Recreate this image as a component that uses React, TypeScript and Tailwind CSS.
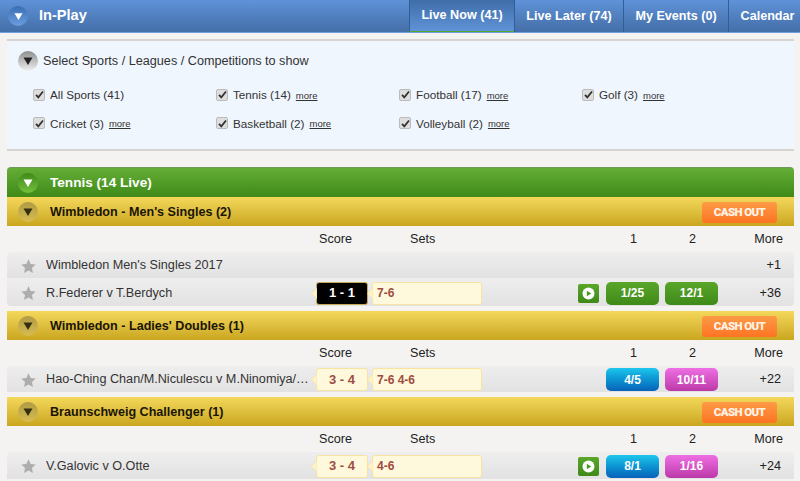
const FONT = "font-['Liberation_Sans',Arial,sans-serif]";

function Arrow(props: { color: string; size?: number }) {
  const s = props.size ?? 10;
  return (
    <svg width={s} height={s} viewBox="0 0 10 10">
      <path d="M0.5 1.5H9.5L5 9Z" fill={props.color} />
    </svg>
  );
}

function Star() {
  return (
    <svg width="15" height="14" viewBox="0 0 24 23">
      <path d="M12 0.5l3.5 7.6 8.3 1-6.1 5.700 1.6 8.200L12 18.900 4.700 23l1.600-8.200L0.200 9.100l8.300-1z" fill="#aeadad" />
    </svg>
  );
}

function Play() {
  return (
    <div className="flex h-[19px] w-[21px] items-center justify-center rounded-[2px] bg-gradient-to-b from-[#5aa62a] to-[#3f8a18]">
      <svg width="13" height="13" viewBox="0 0 13 13">
        <circle cx="6.500" cy="6.500" r="6" fill="#fff" />
        <path d="M4.800 3.700L9.300 6.500 4.800 9.300Z" fill="#4c9a20" />
      </svg>
    </div>
  );
}

function CashOut() {
  return (
    <div className="mt-[2px] flex h-[21px] w-[75px] items-center justify-center rounded-[3px] bg-gradient-to-b from-[#fd9a45] to-[#fd7322] pt-[1px] font-['Roboto',sans-serif] text-[11.5px] font-black tracking-[-0.6px] text-[#fdf3e6]">
      CASH OUT
    </div>
  );
}

function GoldBar(props: { title: string }) {
  return (
    <div className="flex h-[29px] items-center border-b border-b-[#c8a722] bg-gradient-to-b from-[#f4d85a] to-[#cba81f] pr-[17px]">
      <div className="ml-[11px] mt-[2px] flex h-5 w-5 items-center justify-center rounded-full bg-gradient-to-b from-[#b09a45] to-[#d8bc50]">
        <Arrow color="#34300f" />
      </div>
      <div className="ml-[12px] mt-[2px] flex-1 text-[12.6px] font-bold text-[#1a1505]">{props.title}</div>
      <CashOut />
    </div>
  );
}

function ColumnHeads() {
  return (
    <div className="flex h-[26px] items-center pt-[1px] text-[12.6px] text-[#222]">
      <div className="w-[312px] shrink-0" />
      <div className="w-[91px] shrink-0">Score</div>
      <div className="w-[197px] shrink-0">Sets</div>
      <div className="w-[53px] shrink-0 text-center">1</div>
      <div className="w-[6px] shrink-0" />
      <div className="w-[53px] shrink-0 text-center">2</div>
      <div className="flex-1 pr-[11px] text-right">More</div>
    </div>
  );
}

type MatchProps = {
  name: string;
  score?: string;
  black?: boolean;
  sets?: string;
  play?: boolean;
  odds?: [string, string];
  tone?: 'green' | 'color';
  more: string;
  h: string;
};

function Notch() {
  return (
    <svg className="absolute left-[-6px] top-[5px] z-10" width="6" height="11" viewBox="0 0 6 11">
      <path d="M6 0L0.500 5.500 6 11Z" fill="#fdf3c4" stroke="#f6dfa0" strokeWidth="0.6" />
    </svg>
  );
}

function ScoreBox(props: { score: string; black?: boolean }) {
  return (
    <div
      className={`relative flex h-[23px] w-[52px] shrink-0 items-center justify-center rounded-[3px] border text-[13px] font-bold ${
        props.black ? 'border-[#c9a95a] bg-black text-white' : 'border-[#f8e3a0] bg-[#fef8dc] text-[#a04c40]'
      }`}
    >
      <Notch />
      {props.score}
    </div>
  );
}

function Odd(props: { label: string; style: string }) {
  return (
    <div
      className={`flex h-[23px] w-[53px] shrink-0 items-center justify-center rounded-[5px] text-[12px] font-bold text-white ${props.style}`}
    >
      {props.label}
    </div>
  );
}

function Match(props: MatchProps) {
  const left =
    props.tone === 'green'
      ? 'bg-gradient-to-b from-[#5aa62a] to-[#3f8a18]'
      : 'bg-gradient-to-b from-[#1ec6ec] to-[#0b62b8]';
  const right =
    props.tone === 'green'
      ? 'bg-gradient-to-b from-[#5aa62a] to-[#3f8a18]'
      : 'bg-gradient-to-b from-[#ee6fe4] to-[#bc38a8]';
  return (
    <div className={`flex items-center bg-gradient-to-b from-[#efeeee] to-[#e3e2e3] text-[12.65px] text-[#333] ${props.h}`}>
      <div className="flex w-[39px] shrink-0 justify-end pr-[10px]">
        <Star />
      </div>
      <div className="mr-[6px] w-[264px] shrink-0 whitespace-nowrap">{props.name}</div>
      {props.score ? <ScoreBox score={props.score} black={props.black} /> : <div className="w-[52px] shrink-0" />}
      {props.sets ? (
        <div className="relative ml-[4px] flex h-[23px] w-[110px] shrink-0 items-center rounded-[3px] border border-[#f8e3a0] bg-[#fef8dc] pl-[4px] text-[12px] font-bold text-[#a04c40]">
          <Notch />
          {props.sets}
        </div>
      ) : (
        <div className="ml-[4px] w-[110px] shrink-0" />
      )}
      <div className="flex w-[117px] shrink-0 justify-end">{props.play && <Play />}</div>
      <div className="w-[7px] shrink-0" />
      {props.odds ? (
        <div className="flex shrink-0 gap-[6px]">
          <Odd label={props.odds[0]} style={left} />
          <Odd label={props.odds[1]} style={right} />
        </div>
      ) : (
        <div className="w-[112px] shrink-0" />
      )}
      <div className="flex-1 pr-[13px] text-right text-[#222]">{props.more}</div>
    </div>
  );
}

function Check(props: { label: string; more?: boolean }) {
  return (
    <div className="flex w-[182px] items-center">
      <div className="flex h-[12px] w-[12px] items-center justify-center rounded-[2px] border border-[#bbb] bg-[#dedede]">
        <svg width="9" height="9" viewBox="0 0 9 9">
          <path d="M1 4.800L3.300 7.300 8 1.500" fill="none" stroke="#333" strokeWidth="1.800" />
        </svg>
      </div>
      <span className="ml-[5px] text-[11.7px] text-[#333]">{props.label}</span>
      {props.more && <span className="ml-[5px] mt-[2px] text-[9.5px] text-[#333] underline">more</span>}
    </div>
  );
}

function Tab(props: { label: string; w: string; active?: boolean }) {
  return (
    <div
      className={`flex h-[32px] items-center justify-center border-l border-l-[#2f5f98] text-[12.6px] font-bold text-white ${props.w} ${
        props.active ? 'border-b border-b-[#5aa62a] bg-gradient-to-b from-[#3f6ea8] to-[#5f92d8]' : ''
      }`}
    >
      {props.label}
    </div>
  );
}

export default function App() {
  return (
    <div className={`h-[481px] w-[800px] overflow-hidden bg-[#f4f3f1] ${FONT}`}>
      <header className="flex h-[33px] items-center border-b border-b-[#6e9edb] bg-gradient-to-b from-[#5f92d8] to-[#446fa8]">
        <div className="ml-[8px] flex h-[20px] w-[20px] items-center justify-center rounded-full bg-gradient-to-b from-[#3a6fb5] to-[#6b9ce0]">
          <Arrow color="#fff" size={9} />
        </div>
        <div className="ml-[11px] flex-1 text-[14.6px] font-bold text-white">In-Play</div>
        <Tab label="Live Now (41)" w="w-[105px]" active />
        <Tab label="Live Later (74)" w="w-[109px]" />
        <Tab label="My Events (0)" w="w-[105px]" />
        <Tab label="Calendar" w="w-[72px] pl-[6px]" />
      </header>

      <main className="px-[7px] pr-[6px] pt-[6px]">
        <section className="h-[112px] border-y-2 border-y-[#d6d3d0] bg-[#f0f6fe]">
          <div className="flex items-center pl-[11px] pt-[10px]">
            <div className="flex h-5 w-5 items-center justify-center rounded-full bg-gradient-to-b from-[#8f8f8f] to-[#f0f0f0]">
              <Arrow color="#222" />
            </div>
            <span className="ml-[5px] text-[12.65px] text-[#333]">Select Sports / Leagues / Competitions to show</span>
          </div>
          <div className="ml-[26px] mt-[15px] grid grid-cols-[183px_183px_183px_183px] gap-y-[11px]">
            <Check label="All Sports (41)" />
            <Check label="Tennis (14)" more />
            <Check label="Football (17)" more />
            <Check label="Golf (3)" more />
            <Check label="Cricket (3)" more />
            <Check label="Basketball (2)" more />
            <Check label="Volleyball (2)" more />
          </div>
        </section>

        <div className="mt-[16px] flex h-[30px] items-center rounded-t-[4px] border-t border-t-[#6f9a5c] bg-gradient-to-b from-[#64ae36] to-[#3f8a18] pt-[1px]">
          <div className="ml-[11px] flex h-5 w-5 items-center justify-center rounded-full bg-gradient-to-b from-[#3f8a18] to-[#74c03c]">
            <Arrow color="#fff" />
          </div>
          <span className="ml-[12px] text-[13.6px] font-bold text-white">Tennis (14 Live)</span>
        </div>

        <GoldBar title="Wimbledon - Men's Singles (2)" />
        <ColumnHeads />
        <div className="overflow-hidden rounded-[4px]">
          <Match name="Wimbledon Men's Singles 2017" more="+1" h="h-[26px] pt-[1px]" />
          <Match
            name="R.Federer v T.Berdych"
            score="1 - 1"
            black
            sets="7-6"
            play
            odds={['1/25', '12/1']}
            tone="green"
            more="+36"
            h="h-[28px] pt-[2px]"
          />
        </div>

        <div className="h-[5px]" />
        <GoldBar title="Wimbledon - Ladies' Doubles (1)" />
        <ColumnHeads />
        <Match
          name="Hao-Ching Chan/M.Niculescu v M.Ninomiya/…"
          score="3 - 4"
          sets="7-6 4-6"
          odds={['4/5', '10/11']}
          more="+22"
          h="h-[26px] pt-[1px] rounded-t-[4px]"
        />

        <div className="h-[5px]" />
        <GoldBar title="Braunschweig Challenger (1)" />
        <ColumnHeads />
        <Match
          name="V.Galovic v O.Otte"
          score="3 - 4"
          sets="4-6"
          play
          odds={['8/1', '1/16']}
          more="+24"
          h="h-[27px] pt-[1px] rounded-t-[4px]"
        />
      </main>
    </div>
  );
}
